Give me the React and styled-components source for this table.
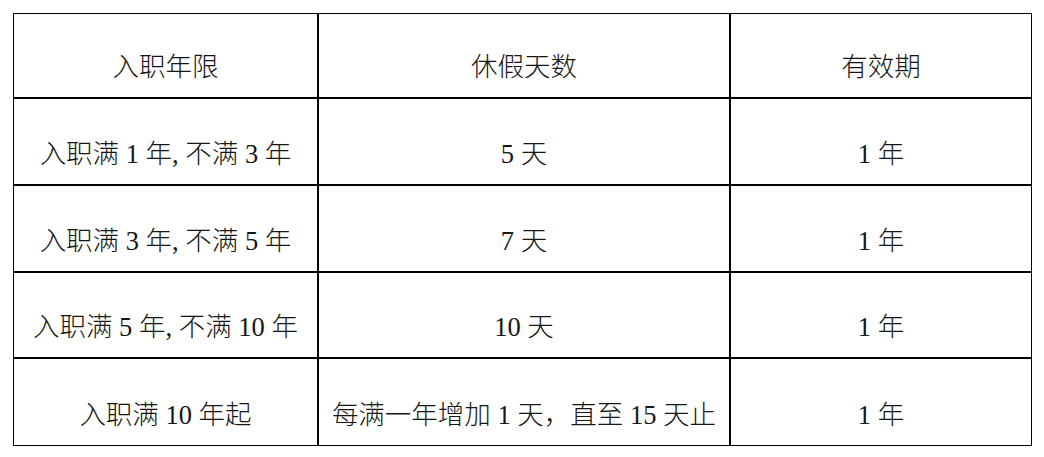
import React from "react";
import styled, { createGlobalStyle } from "styled-components";

const Global = createGlobalStyle`
  html, body { margin: 0; padding: 0; background: #ffffff; }
  body { font-family: "Liberation Serif", "Noto Sans CJK SC", serif; }
`;

const Page = styled.div`
  padding: 13px 0 0 13px;
`;

const Table = styled.table`
  border-collapse: separate;
  border-spacing: 0;
  border: 1px solid #000;
  table-layout: fixed;
  width: 1019px;
`;

const Row = styled.tr`
  height: ${(p) => p.$h}px;
`;

const Cell = styled.td`
  box-sizing: border-box;
  width: ${(p) => p.$w}px;
  border-right: ${(p) => (p.$lastCol ? "none" : "2px solid #000")};
  border-bottom: ${(p) => (p.$lastRow ? "none" : "2px solid #000")};
  padding: 0 0 15px 0;
  vertical-align: bottom;
  text-align: center;
  font-family: "Liberation Serif", "Noto Sans CJK SC", serif;
  font-weight: 300;
  font-size: 26.5px;
  line-height: 30px;
  color: #161616;
  white-space: nowrap;
`;

const widths = [305, 412, 300];
const heights = [85, 87, 87, 86, 86];

const rows = [
  ["入职年限", "休假天数", "有效期"],
  ["入职满 1 年, 不满 3 年", "5 天", "1 年"],
  ["入职满 3 年, 不满 5 年", "7 天", "1 年"],
  ["入职满 5 年, 不满 10 年", "10 天", "1 年"],
  ["入职满 10 年起", "每满一年增加 1 天，直至 15 天止", "1 年"],
];

export default function App() {
  return (
    <Page>
      <Global />
      <Table>
        <tbody>
          {rows.map((r, i) => (
            <Row key={i} $h={heights[i]}>
              {r.map((c, j) => (
                <Cell
                  key={j}
                  $w={widths[j]}
                  $lastCol={j === r.length - 1}
                  $lastRow={i === rows.length - 1}
                >
                  {c}
                </Cell>
              ))}
            </Row>
          ))}
        </tbody>
      </Table>
    </Page>
  );
}
